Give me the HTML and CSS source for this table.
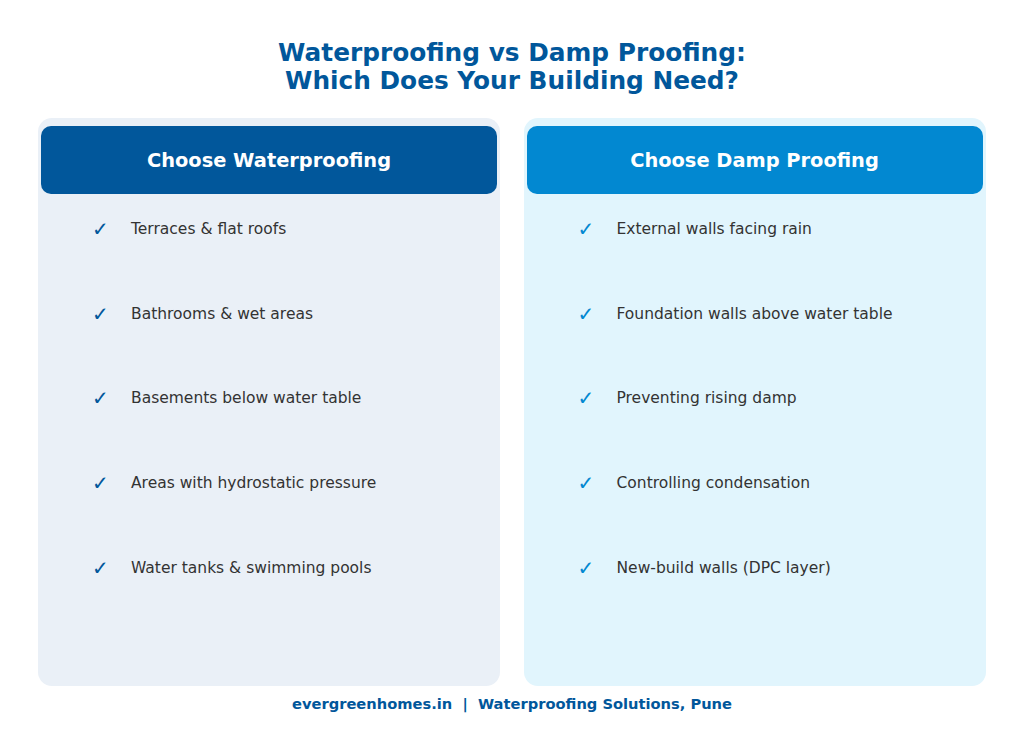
FILE: index.html
```html
<!DOCTYPE html>
<html>
<head>
<meta charset="utf-8">
<link rel="stylesheet" href="styles.css">
</head>
<body>
<div class="page">
  <h1 class="title">Waterproofing vs Damp Proofing:<br>Which Does Your Building Need?</h1>
  <div class="columns">
    <section class="panel panel-water">
      <div class="panel-head">Choose Waterproofing</div>
      <ul class="list">
        <li class="item"><span class="check">✓</span><span class="label">Terraces &amp; flat roofs</span></li>
        <li class="item"><span class="check">✓</span><span class="label">Bathrooms &amp; wet areas</span></li>
        <li class="item"><span class="check">✓</span><span class="label">Basements below water table</span></li>
        <li class="item"><span class="check">✓</span><span class="label">Areas with hydrostatic pressure</span></li>
        <li class="item"><span class="check">✓</span><span class="label">Water tanks &amp; swimming pools</span></li>
      </ul>
    </section>
    <section class="panel panel-damp">
      <div class="panel-head">Choose Damp Proofing</div>
      <ul class="list">
        <li class="item"><span class="check">✓</span><span class="label">External walls facing rain</span></li>
        <li class="item"><span class="check">✓</span><span class="label">Foundation walls above water table</span></li>
        <li class="item"><span class="check">✓</span><span class="label">Preventing rising damp</span></li>
        <li class="item"><span class="check">✓</span><span class="label">Controlling condensation</span></li>
        <li class="item"><span class="check">✓</span><span class="label">New-build walls (DPC layer)</span></li>
      </ul>
    </section>
  </div>
  <footer class="footer">evergreenhomes.in&nbsp; | &nbsp;Waterproofing Solutions, Pune</footer>
</div>
</body>
</html>
```

FILE: styles.css
```css
html, body {
  margin: 0;
  padding: 0;
  background: #ffffff;
}
body {
  font-family: "DejaVu Sans", sans-serif;
  width: 1024px;
  height: 735px;
  overflow: hidden;
}
.page {
  padding-top: 39px;
}
.title {
  margin: 0;
  text-align: center;
  font-size: 24.8px;
  line-height: 27.5px;
  font-weight: bold;
  color: #01579b;
}
.columns {
  display: flex;
  gap: 23.5px;
  padding: 0 38px;
  margin-top: 24px;
}
.panel {
  width: 462px;
  height: 568px;
  box-sizing: border-box;
  padding: 8px 3px 0;
  border-radius: 14px;
}
.panel-water { background: #eaf0f7; }
.panel-damp { background: #e1f5fd; }
.panel-head {
  height: 68px;
  border-radius: 10px;
  display: flex;
  align-items: center;
  justify-content: center;
  color: #ffffff;
  font-weight: bold;
  font-size: 19.4px;
}
.panel-water .panel-head { background: #01579b; }
.panel-damp .panel-head { background: #0288d1; }
.list {
  list-style: none;
  margin: 0;
  padding: 25px 0 0 51px;
  display: flex;
  flex-direction: column;
  gap: 64.7px;
}
.item {
  display: flex;
  align-items: center;
  height: 20px;
}
.check {
  width: 39px;
  font-size: 20px;
}
.panel-water .check { color: #01579b; }
.panel-damp .check { color: #0288d1; }
.label {
  font-size: 15.5px;
  color: #333333;
}
.footer {
  margin-top: 9px;
  text-align: center;
  font-weight: bold;
  font-size: 14.67px;
  line-height: 18px;
  color: #01579b;
}
```
